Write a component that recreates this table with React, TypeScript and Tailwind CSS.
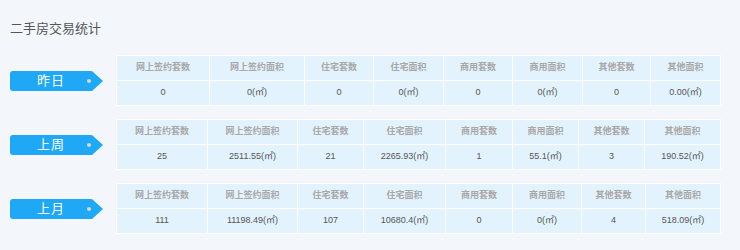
import React from "react";

// one block of the stats: tag on the left, two-row table on the right
type Block = {
  label: string;
  cols: string[]; // width class per column
  values: string[];
};

const heads = ["网上签约套数", "网上签约面积", "住宅套数", "住宅面积", "商用套数", "商用面积", "其他套数", "其他面积"];

const blocks: Block[] = [
  {
    label: "昨日",
    cols: ["w-[93px]", "w-[95px]", "w-[69px]", "w-[70px]", "w-[69px]", "w-[70px]", "w-[68px]", "w-[70px]"],
    values: ["0", "0(㎡)", "0", "0(㎡)", "0", "0(㎡)", "0", "0.00(㎡)"],
  },
  {
    label: "上周",
    cols: ["w-[91px]", "w-[90px]", "w-[66px]", "w-[82px]", "w-[67px]", "w-[66px]", "w-[66px]", "w-[76px]"],
    values: ["25", "2511.55(㎡)", "21", "2265.93(㎡)", "1", "55.1(㎡)", "3", "190.52(㎡)"],
  },
  {
    label: "上月",
    cols: ["w-[91px]", "w-[90px]", "w-[66px]", "w-[82px]", "w-[67px]", "w-[69px]", "w-[64px]", "w-[75px]"],
    values: ["111", "11198.49(㎡)", "107", "10680.4(㎡)", "0", "0(㎡)", "4", "518.09(㎡)"],
  },
];

function Tag({ label }: { label: string }) {
  return (
    <div className="flex items-center shrink-0">
      <div className="relative w-[82px] h-[20px] bg-[#1ea8f6] rounded-l-[3px] rounded-tr-[1px] flex items-center justify-center text-white text-[13px] leading-[20px] tracking-[1px]">
        {label}
        <span className="absolute right-[1px] top-1/2 -translate-y-1/2 w-[4px] h-[4px] rounded-full bg-[#d6d6d6]" />
      </div>
      <div className="w-0 h-0 border-y-[10px] border-y-transparent border-l-[11px] border-l-[#1ea8f6]" />
    </div>
  );
}

export default function App() {
  return (
    <div
      className="w-[740px] h-[250px] bg-[#f3f7fb] pl-[10px] pt-[19px]"
      style={{ fontFamily: '"Liberation Sans", "Noto Sans CJK SC", sans-serif' }}
    >
      <h1 className="text-[13px] leading-[20px] text-[#555] font-normal">二手房交易统计</h1>
      <div className="mt-[16px] flex flex-col gap-[13px]">
        {blocks.map((b) => (
          <div key={b.label} className="flex items-center gap-[13px]">
            <Tag label={b.label} />
            <table className="table-fixed border-collapse w-[604px] text-[9px]">
              <colgroup>
                {b.cols.map((c, i) => (
                  <col key={i} className={c} />
                ))}
              </colgroup>
              <tbody>
                <tr className="h-[25px]">
                  {heads.map((h) => (
                    <td key={h} className="border border-white bg-[#e3f3fd] text-center text-[#a8a8a8] font-bold">
                      {h}
                    </td>
                  ))}
                </tr>
                <tr className="h-[25px]">
                  {b.values.map((v, i) => (
                    <td key={i} className="border border-white bg-[#e3f3fd] text-center text-[#555]">
                      {v}
                    </td>
                  ))}
                </tr>
              </tbody>
            </table>
          </div>
        ))}
      </div>
    </div>
  );
}
